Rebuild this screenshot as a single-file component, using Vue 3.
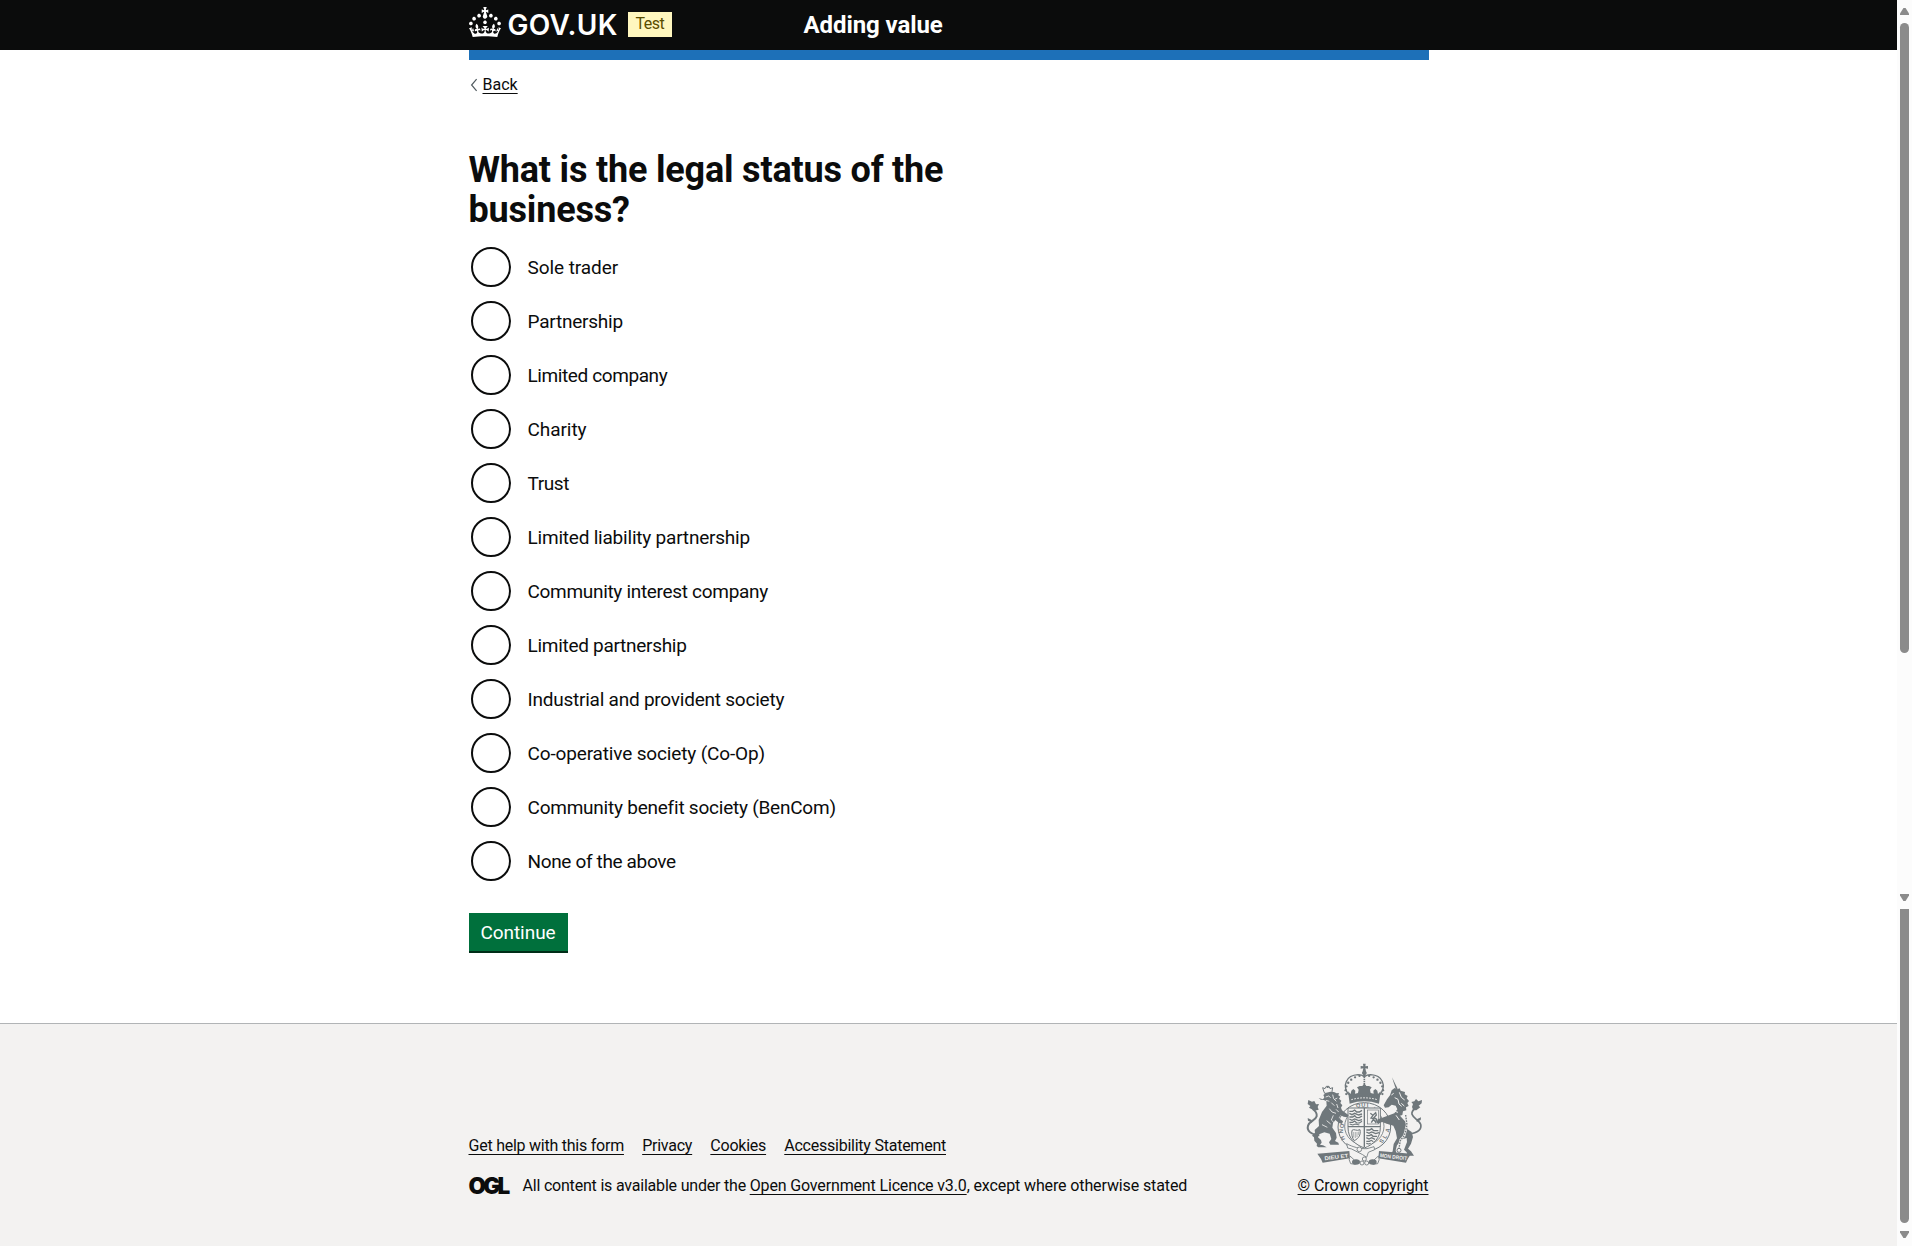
<script setup>
import { ref } from 'vue'

const selected = ref('')
const options = [
  { text: 'Sole trader', tracking: -0.08 },
  { text: 'Partnership', tracking: -0.23 },
  { text: 'Limited company', tracking: -0.4 },
  { text: 'Charity', tracking: -0.06 },
  { text: 'Trust', tracking: -0.4 },
  { text: 'Limited liability partnership', tracking: -0.21 },
  { text: 'Community interest company', tracking: -0.31 },
  { text: 'Limited partnership', tracking: -0.29 },
  { text: 'Industrial and provident society', tracking: -0.23 },
  { text: 'Co-operative society (Co-Op)', tracking: -0.15 },
  { text: 'Community benefit society (BenCom)', tracking: -0.23 },
  { text: 'None of the above', tracking: -0.35 },
]
const footerLinks = ['Get help with this form', 'Privacy', 'Cookies', 'Accessibility Statement']

// Beads along the arches of the footer crown
const beads = Array.from({ length: 15 }, (_, i) => {
  const a = Math.PI * (1.08 - (i * 1.16) / 14)
  return { x: 223 + 56 * Math.cos(a), y: 121 - 45 * Math.sin(a) }
})
</script>

<template>
  <div class="window">
    <div class="page">
      <header class="header">
        <div class="container header-row">
          <div class="brand">
            <svg class="crown" viewBox="0 0 32 30" width="32" height="30" fill="#fff">
              <path d="M22.6 10.4c-1 .4-2-.1-2.4-1-.4-.9.1-2 1-2.4.9-.4 2 .1 2.4 1s-.1 2-1 2.4m-5.9 6.7c-.9.4-2-.1-2.4-1-.4-.9.1-2 1-2.4.9-.4 2 .1 2.4 1s-.1 2-1 2.4m10.8-3.7c-1 .4-2-.1-2.4-1-.4-.9.1-2 1-2.4.9-.4 2 .1 2.4 1s0 2-1 2.4m3.3 4.8c-1 .4-2-.1-2.4-1-.4-.9.1-2 1-2.4.9-.4 2 .1 2.4 1s-.1 2-1 2.4M17 4.7l2.3 1.2V2.5l-2.3.7-.2-.2.9-3h-3.4l.9 3-.2.2c-.1.1-2.3-.7-2.3-.7v3.4L15 4.7c.1.1.1.2.2.2l-1.3 4c-.1.2-.1.4-.1.6 0 1.1.8 2 1.9 2.2h.7c1-.2 1.9-1.1 1.9-2.1 0-.2 0-.4-.1-.6l-1.3-4c-.1-.2 0-.2.1-.3m-7.6 5.7c.9.4 2-.1 2.4-1 .4-.9-.1-2-1-2.4-.9-.4-2 .1-2.4 1s0 2 1 2.4m-5 3c.9.4 2-.1 2.4-1 .4-.9-.1-2-1-2.4-.9-.4-2 .1-2.4 1s.1 2 1 2.4m-3.2 4.8c.9.4 2-.1 2.4-1 .4-.9-.1-2-1-2.4-.9-.4-2 .1-2.4 1s0 2 1 2.4m14.8 11c4.4 0 8.6.3 12.3.8 1.1-4.5 2.4-7 3.7-8.8l-2.5-.9c.2 1.3.3 1.9 0 2.7-.4-.4-.8-1.1-1.1-2.3l-1.2 4c.7-.5 1.3-.8 2-.9-1.1 2.5-2.6 3.1-3.5 3-1.1-.2-1.7-1.2-1.5-2.1.3-1.2 1.5-1.5 2.1-.1 1.1-2.3-.8-3-2-2.3 1.9-1.9 2.1-3.5.6-5.6-2.1 1.6-2.1 3.2-1.2 5.5-1.2-1.4-3.2-.6-2.5 1.6.9-1.4 2.1-.5 1.9.8-.2 1.1-1.7 2.1-3.5 1.9-2.7-.2-2.9-2.1-2.9-3.6.7-.1 1.9.5 2.9 1.9l.4-4.3c-1.1 1.1-2.1 1.4-3.2 1.4.4-1.2 2.1-3 2.1-3h-5.4s1.7 1.9 2.1 3c-1.1 0-2.1-.2-3.2-1.4l.4 4.3c1-1.4 2.2-2 2.9-1.9-.1 1.5-.2 3.4-2.9 3.6-1.9.2-3.4-.8-3.5-1.9-.2-1.3 1-2.2 1.9-.8.7-2.3-1.2-3-2.5-1.6.9-2.2.9-3.9-1.2-5.5-1.5 2-1.3 3.7.6 5.6-1.2-.7-3.1 0-2 2.3.6-1.4 1.8-1.1 2.1.1.2.9-.3 1.9-1.5 2.1-.9.2-2.4-.5-3.5-3 .6 0 1.2.3 2 .9l-1.2-4c-.3 1.1-.7 1.9-1.1 2.3-.3-.8-.2-1.4 0-2.7l-2.9.9C1.3 23 2.6 25.5 3.7 30c3.7-.5 7.9-.8 12.3-.8" />
            </svg>
            <span class="wordmark">GOV.UK</span>
            <strong class="tag">Test</strong>
          </div>
          <span class="service">Adding value</span>
        </div>
      </header>

      <div class="container body">
        <div class="phase-bar"></div>
        <a class="back">
          <svg viewBox="0 0 8 14" width="8" height="14" fill="none" stroke="#505a5f" stroke-width="1.2">
            <path d="M6.6 1.2 1.6 7l5 5.8" />
          </svg>
          <span class="link">Back</span>
        </a>

        <main>
          <h1>What is the legal status of the business?</h1>
          <div class="radios">
            <label v-for="option in options" :key="option.text" class="radio">
              <input v-model="selected" type="radio" name="status" :value="option.text" />
              <span :style="{ letterSpacing: option.tracking + 'px' }">{{ option.text }}</span>
            </label>
          </div>
          <button type="button" class="button">Continue</button>
        </main>
      </div>

      <footer class="footer">
        <div class="container footer-row">
          <div class="meta">
            <ul class="links">
              <li v-for="item in footerLinks" :key="item"><a class="link">{{ item }}</a></li>
            </ul>
            <div class="licence">
              <span class="ogl">OGL</span>
              <span>All content is available under the <a class="link">Open Government Licence v3.0</a><span class="tail">, except where otherwise stated</span></span>
            </div>
          </div>
          <div class="copyright">
            <svg class="arms" viewBox="42 36 360 318" width="120" height="106" fill="#6f777b" stroke="none">
              <!-- crown -->
              <path d="M219 41h8l-1 8 8-1v8l-8-1 2 9a7 7 0 1 1-10 0l2-9-8 1v-8l8 1z" />
              <g fill="none" stroke="#6f777b" stroke-width="4">
                <path d="M176 134c-20-28-8-58 28-60 8 0 14 2 19 6 5-4 11-6 19-6 36 2 48 32 28 60" />
                <path d="M223 80v52" stroke-width="5" stroke-dasharray="4 2" />
              </g>
              <circle v-for="(b, i) in beads" :key="i" :cx="b.x" :cy="b.y" r="3.5" />
              <path d="M174 124l8 8 2-10 6-5 6 5-1 9 9-2 2-10-5-7 8-4h8l6-8 6 8h8l8 4-5 7 2 10 9 2-1-9 6-5 6 5 2 10 8-8-5 37q-44-14-88 0z" />
              <path d="M184 149q39-11 78 0" fill="none" stroke="#f3f2f1" stroke-width="3" stroke-dasharray="5 4" />

              <!-- garter -->
              <g fill="none" stroke="#6f777b">
                <ellipse cx="223" cy="231" rx="79" ry="73" stroke-width="3" />
                <ellipse cx="223" cy="229" rx="59" ry="56" stroke-width="2.5" />
              </g>
              <g class="motto">
                <text x="199" y="173" transform="rotate(-8 199 172)">Q</text>
                <text x="214" y="170">U</text>
                <text x="230" y="170">I</text>
                <text x="250" y="176" transform="rotate(20 250 176)">·</text>
                <text x="160" y="250" transform="rotate(-90 160 250)">N</text>
                <text x="161" y="235" transform="rotate(-85 161 235)">O</text>
                <text x="166" y="268" transform="rotate(-115 166 268)">H</text>
                <text x="286" y="208" transform="rotate(75 286 208)">M</text>
                <text x="297" y="248" transform="rotate(-76 297 248)">A</text>
                <text x="287" y="267" transform="rotate(-62 287 267)">L</text>
                <text x="276" y="281" transform="rotate(-52 276 281)">S</text>
              </g>

              <!-- shield -->
              <path d="M174 174h97v58c0 34-22 52-48 62-27-10-49-28-49-62z" fill="#f3f2f1" stroke="#6f777b" stroke-width="3" />
              <path d="M221 174h4v118h-4zM174 228h97v4h-97z" />
              <g fill="none" stroke="#6f777b">
                <path d="M178 184h10l6-4 6 6h8l8-5M178 190l8 4 8-4 12 5 10-3" stroke-width="4" />
                <path d="M178 201h10l6-4 6 6h8l8-5M178 207l8 4 8-4 12 5 10-3" stroke-width="4" />
                <path d="M178 217h10l6-4 6 6h8l8-5M179 222l9 3 8-3 12 3" stroke-width="3.5" />
                <path d="M229 240h10l6-4 6 6h14M229 246l8 4 8-4 12 5 10-3" stroke-width="4" />
                <path d="M229 257h9l6-3 5 5h12M229 263l8 4 8-4 10 5" stroke-width="4" />
                <path d="M229 274h9l6-3 6 4M229 280l7 2 6-2" stroke-width="3.5" />
                <rect x="232" y="180" width="33" height="42" stroke-width="2" />
                <path d="M241 190l8 6-6 8 8 2-7 12M249 196l8-8 2 7-7 8 8 5-3 9-6-9" stroke-width="4" />
                <path d="M186 241c6-6 14 4 24-2 3 16-4 26-17 33-7-8-9-20-7-31z" stroke-width="3" />
                <path d="M191 246v16M196 246v18M201 246v15M206 245v10" stroke-width="1.6" />
              </g>

              <!-- lion -->
              <path d="M101 123l-3-10 7 3 4-7h8l3 7 8-3-2 11 2 6h-24z" fill="#f3f2f1" stroke="#6f777b" stroke-width="3" />
              <path d="M110 108h6v6h-6z" />
              <path d="M99 148l4-6-3-7 8-6 13-4 11 1 8 4 7-1-2 7 6 4-4 6 7 6-3 7 6 7-4 7 3 8 12 9 8 6-6 6-9-2-9-4-6 8 13 10-3 8-9-3-11-9-7 10-2 13 11 16 2 14-5 10 10 5 2 6h-26l-4-7 7-10-5-16-16-4-16 6-3 9 9 8 2 8-5 6 9 2 11 6h-25l-5-4 1-7-8-9-1-10-6-5 9-9-1-8 13-12-1-18 10-24 14-19-1-14-8-3-9-1-6-5z" />
              <path d="M107 141l9-3 6 5M108 151l10 3M128 134l3 12 8 8M124 158l9 9M140 162l4 12M118 176l8 10 12 4M134 148l8-4M138 178l8 8M130 196l-6 14 8 8M96 224l16 8M110 212l12 10" fill="none" stroke="#f3f2f1" stroke-width="2.5" />
              <path d="M88 256c-26-2-38-14-34-29 4-14 23-16 26-28 2-10-5-17-12-22" fill="none" stroke="#6f777b" stroke-width="6" />
              <path d="M74 182l-17-9 4-5-8-6 2-12 11 5 7-2 5 10 9-1-4 9 3 8z" />
              <path d="M66 218l-12-6-1-8 12 6z" />

              <!-- unicorn -->
              <path d="M306 82l17 34-5 3z" />
              <path d="M291 148l9-12 5-15 9-7 7 4 8-3 3 7 13 4-1 7 9 5-3 7 7 8-5 6 4 9-8 4 1 9-10 3-2 11-7 2 17 19 6 22 12 8 4 15-6 20-9 15 9 8 9 13h-19l-3-10-8-8 9-23-1-12-13 4-16 18-4 15 4 16h-17l-2-6 6-7 3-22 10-17-4-22-7-16-15-4-19-7-11 5-7-4 6-9 13-5 22-8 14-5 9-12-5-11-12-3-9 8-11 1-4-7z" />
              <path d="M304 135l7-5M314 143l10 5 3 14 8 7M328 127l6 15 10 8M334 160l9 8M289 186l19-4 16 5M318 196l10 14" fill="none" stroke="#f3f2f1" stroke-width="3" />
              <path d="M357 252c27-3 39-14 35-29-4-13-22-17-26-30-2-8 4-14 10-19" fill="none" stroke="#6f777b" stroke-width="5" />
              <path d="M370 181l-4-10 3-9-5-6 9-2 5-7 7 7 11-4-1 10-9 7 5 5-12 9z" />
              <path d="M380 216l12-6 1-8-13 6z" />
              <path d="M347 195l4 30-8 32-12 14-4 24" fill="none" stroke="#f3f2f1" stroke-width="7" />
              <path d="M347 195l4 30-8 32-12 14-4 24" fill="none" stroke="#6f777b" stroke-width="4" stroke-dasharray="5 3" />
              <circle cx="327" cy="301" r="6" fill="none" stroke="#6f777b" stroke-width="3" />

              <!-- scroll and compartment -->
              <path d="M82 311l96-8 2 22-82 13-5-11zM363 311l-96-8-2 22 83 13 5-11z" />
              <g class="scroll">
                <text x="104" y="331" textLength="72" lengthAdjust="spacingAndGlyphs" transform="rotate(-7 104 331)">DIEU ET</text>
                <text x="269" y="321" textLength="82" lengthAdjust="spacingAndGlyphs" transform="rotate(7 269 321)">MON DROIT</text>
              </g>
              <path d="M170 281c18 10 40 16 61 15l21-6 2 9-19 8-5 15-12-8-33-17-12-3z" fill="#f3f2f1" stroke="#6f777b" stroke-width="2.5" />
              <circle cx="208" cy="298" r="7" fill="#f3f2f1" stroke="#6f777b" stroke-width="2.5" />
              <path d="M180 318l14 13 2 12-14-2q-8-12-2-23zM265 318l-14 13-2 12 14-2q8-12 2-23z" fill="#f3f2f1" stroke="#6f777b" stroke-width="2.5" />
              <ellipse cx="198" cy="336" rx="12" ry="8" />
              <ellipse cx="248" cy="336" rx="12" ry="8" />
              <g fill="#f3f2f1" stroke="#6f777b" stroke-width="2.5">
                <circle cx="223" cy="327" r="6" />
                <circle cx="216" cy="339" r="6" />
                <circle cx="230" cy="339" r="6" />
              </g>
            </svg>
            <a class="link">© Crown copyright</a>
          </div>
        </div>
      </footer>
    </div>

    <div class="scrollbars">
      <i class="arrow up"></i>
      <i class="thumb first"></i>
      <i class="arrow down"></i>
      <i class="thumb second"></i>
      <i class="arrow down last"></i>
    </div>
  </div>
</template>

<style>
body {
  margin: 0;
  background: #fff;
}
</style>

<style scoped>
.window {
  display: flex;
  height: 1246px;
  overflow: hidden;
  color: #0b0c0c;
  font-family: Roboto, "Liberation Sans", sans-serif;
  font-size: 16px;
  line-height: 20px;
  letter-spacing: -0.24px;
}
.page {
  flex: 1;
  display: flex;
  flex-direction: column;
  background: #fff;
}
.container {
  width: 960px;
  margin: 0 auto;
}
.link {
  text-decoration: underline;
  text-decoration-thickness: 1px;
  text-underline-offset: 2.5px;
  text-decoration-skip-ink: none;
}

.header {
  height: 50px;
  background: #0b0c0c;
  color: #fff;
}
.header-row {
  display: flex;
  height: 50px;
}
.brand {
  display: flex;
  width: 335px;
}
.crown {
  margin-top: 7px;
  flex: none;
}
.wordmark {
  width: 108px;
  margin: 7px 0 0 7px;
  font: 600 28px/36px Inter, sans-serif;
  letter-spacing: 0.3px;
}
.tag {
  box-sizing: border-box;
  width: 44px;
  height: 25px;
  margin: 12px 0 0 12px;
  padding-left: 8px;
  background: #fff7bf;
  color: #594d00;
  font-weight: 400;
  line-height: 24px;
  letter-spacing: -0.5px;
}
.service {
  font-size: 24px;
  font-weight: 700;
  line-height: 50px;
  letter-spacing: -0.08px;
}

.body {
  flex: none;
  height: 973px;
}
.phase-bar {
  height: 10px;
  background: #1d70b8;
}
.back {
  display: flex;
  align-items: center;
  gap: 5px;
  height: 20px;
  margin: 15px 0 0 1px;
  letter-spacing: 0;
}
h1 {
  width: 620px;
  margin: 55px 0 17px;
  font-size: 36px;
  font-weight: 700;
  line-height: 40px;
  letter-spacing: -0.19px;
}
.radios {
  display: flex;
  flex-direction: column;
  gap: 14px;
  padding-left: 2px;
}
.radio {
  display: flex;
  align-items: center;
  gap: 17px;
  height: 40px;
  font-size: 19px;
  line-height: 25px;
}
.radio input {
  appearance: none;
  box-sizing: border-box;
  width: 40px;
  height: 40px;
  margin: 0;
  border: 2px solid #0b0c0c;
  border-radius: 50%;
}
.radio input:checked {
  box-shadow: inset 0 0 0 8px #fff;
  background: #0b0c0c;
}
.button {
  display: block;
  box-sizing: border-box;
  width: 99px;
  height: 38px;
  margin-top: 32px;
  padding: 2px 0 0;
  border: 0;
  background: #00703c;
  box-shadow: 0 2px 0 #002d18;
  color: #fff;
  font: 400 19px/36px Roboto, sans-serif;
  letter-spacing: -0.05px;
}

.footer {
  flex: 1;
  border-top: 1px solid #b1b4b6;
  background: #f3f2f1;
}
.footer-row {
  display: flex;
  justify-content: space-between;
  align-items: flex-end;
  height: 172px;
}
.links {
  display: flex;
  gap: 18.2px;
  margin: 0 0 20px;
  padding: 0;
  list-style: none;
}
.licence {
  display: flex;
  align-items: center;
  letter-spacing: -0.2px;
}
.licence .link {
  letter-spacing: -0.15px;
}
.tail {
  letter-spacing: -0.12px;
}
.ogl {
  width: 54px;
  font: 900 22.5px/20px Inter, sans-serif;
  letter-spacing: -2.7px;
}
.copyright {
  display: flex;
  flex-direction: column;
  align-items: flex-end;
  letter-spacing: -0.09px;
}
.arms {
  margin: 0 5px 8px 0;
}
.motto {
  font: 700 17px "Liberation Sans", sans-serif;
}
.scroll {
  font: 700 16px "Liberation Sans", sans-serif;
  letter-spacing: 0;
  fill: #f3f2f1;
}

.scrollbars {
  display: flex;
  flex-direction: column;
  align-items: center;
  width: 15px;
  background: #fcfcfc;
}
.thumb {
  width: 9px;
  background: #8b8b8b;
}
.thumb.first {
  height: 630px;
  margin-top: 8px;
  border-radius: 5px;
}
.thumb.second {
  height: 314px;
  margin-top: 8px;
  border-radius: 0 0 5px 5px;
}
.arrow {
  width: 9px;
  height: 7px;
  background: #8b8b8b;
}
.arrow.up {
  margin-top: 8px;
  clip-path: polygon(38% 0, 62% 0, 100% 80%, 100% 100%, 0 100%, 0 80%);
}
.arrow.down {
  margin-top: 241px;
  clip-path: polygon(0 0, 100% 0, 100% 20%, 62% 100%, 38% 100%, 0 20%);
}
.arrow.last {
  margin-top: 8px;
}
</style>
